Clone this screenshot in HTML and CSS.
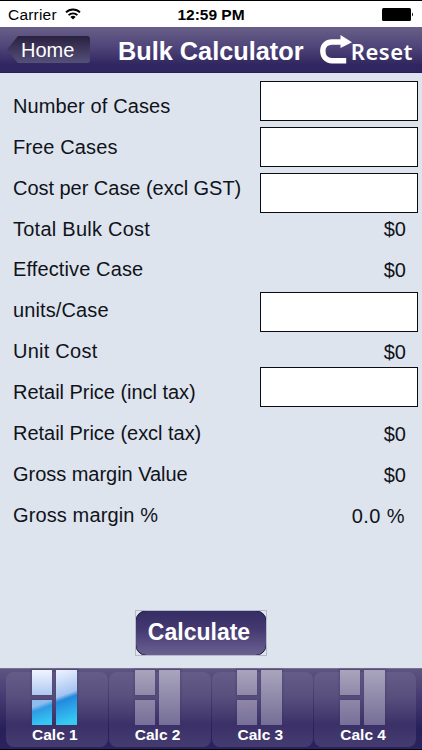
FILE: index.html
```html
<!DOCTYPE html>
<html lang="en">

<head>
    <meta charset="UTF-8">
    <meta name="viewport" content="width=device-width, initial-scale=1">
    <title>Bulk Calculator</title>
    <link rel="stylesheet" href="styles.css">
</head>

<body>
    <div class="status-bar">
        <div class="carrier">
            <span>Carrier</span>
            <svg class="wifi" width="16" height="12" viewBox="0 0 16 12">
                <path d="M1 4.4a10 10 0 0 1 14 0M3.6 7.2a6.2 6.2 0 0 1 8.8 0" fill="none" stroke="#000" stroke-width="1.9" />
                <path d="M5.4 9a3.8 3.8 0 0 1 5.2 0L8 11.6z" />
            </svg>
        </div>
        <span class="time">12:59 PM</span>
        <svg class="battery" width="32" height="13" viewBox="0 0 32 13">
            <rect x="0" y="0" width="29" height="13" rx="1.5" />
            <path d="M30 4.5q2 2 0 4z" />
        </svg>
    </div>

    <header class="nav-bar">
        <a class="home">Home</a>
        <h1>Bulk Calculator</h1>
        <a class="reset">
            <svg width="32" height="30" viewBox="0 0 32 30">
                <path d="M21 7H12C6.500 7 2.800 10.500 2.800 15.800C2.800 21.600 6.500 25.800 12 25.800H26.200" fill="none" stroke="#fff" stroke-width="5.400" />
                <path d="M20.500 0L32 7.200L20.500 13z" fill="#fff" />
            </svg>
            <span>Reset</span>
        </a>
    </header>

    <main>
        <div class="form">
            <div class="labels">
                <label for="cases">Number of Cases</label>
                <label for="free">Free Cases</label>
                <label for="cost" class="long">Cost per Case (excl GST)</label>
                <span class="wide">Total Bulk Cost</span>
                <span>Effective Case</span>
                <label for="units">units/Case</label>
                <span class="wide">Unit Cost</span>
                <label for="retail" class="long">Retail Price (incl tax)</label>
                <span class="long">Retail Price (excl tax)</span>
                <span class="long">Gross margin Value</span>
                <span>Gross margin %</span>
            </div>
            <div class="fields">
                <input type="text" id="cases">
                <input type="text" id="free">
                <input type="text" id="cost">
                <output id="total">$0</output>
                <output id="effective">$0</output>
                <input type="text" id="units">
                <output id="unit-cost">$0</output>
                <input type="text" id="retail">
                <output id="retail-excl">$0</output>
                <output id="margin">$0</output>
                <output id="margin-percent">0.0 %</output>
            </div>
        </div>
        <div class="button-box">
            <button type="button">Calculate</button>
        </div>
    </main>

    <nav class="tab-bar">
        <a class="tab active">
            <span class="panes"><i></i><i class="tall"></i><i></i></span>
            <span>Calc 1</span>
        </a>
        <a class="tab">
            <span class="panes"><i></i><i class="tall"></i><i></i></span>
            <span>Calc 2</span>
        </a>
        <a class="tab">
            <span class="panes"><i></i><i class="tall"></i><i></i></span>
            <span>Calc 3</span>
        </a>
        <a class="tab">
            <span class="panes"><i></i><i class="tall"></i><i></i></span>
            <span>Calc 4</span>
        </a>
    </nav>
</body>

</html>
```
FILE: styles.css
```css
* {
    box-sizing: border-box;
}

body {
    display: flex;
    flex-direction: column;
    width: 422px;
    height: 750px;
    margin: 0;
    overflow: hidden;
    background-color: #dde4ed;
    font-family: "Liberation Sans", Arial, sans-serif;
    color: #10131a;
}

.status-bar {
    display: grid;
    grid-template-columns: 1fr auto 1fr;
    align-items: center;
    height: 27px;
    padding: 2px 8px 0;
    border-top: 1px solid #000;
    background-color: #fff;
    color: #000;
    font-size: 15.5px;
}

.carrier {
    display: flex;
    align-items: center;
    gap: 8px;
    letter-spacing: 0.2px;
}

.wifi {
    margin-top: -3px;
}

.time {
    font-weight: bold;
}

.battery {
    justify-self: end;
    margin-top: -2px;
}

.nav-bar {
    display: flex;
    align-items: center;
    height: 46px;
    padding: 0 9px 0 7px;
    background: linear-gradient(#686088, #4e4479 45%, #30265f 85%, #2f2561);
    border-bottom: 1px solid #282050;
    color: #fff;
}

.home {
    width: 83px;
    height: 27px;
    padding-left: 14px;
    border-radius: 0 3px 3px 0;
    clip-path: polygon(0 50%, 11px 0, 100% 0, 100% 100%, 11px 100%);
    background: linear-gradient(#29213f, #55507a);
    font-size: 20px;
    line-height: 28px;
}

h1 {
    margin: 0 0 0 28px;
    padding-top: 2px;
    font-size: 25.3px;
    line-height: 46px;
    white-space: nowrap;
}

.reset {
    display: flex;
    align-items: center;
    margin-left: auto;
    font-family: "Noto Sans", sans-serif;
    font-size: 22px;
    font-weight: 600;
    letter-spacing: 0.5px;
}

.reset svg {
    margin: 1px -1px 0 0;
}

.reset span {
    margin-top: 2px;
}

main {
    flex: 1;
}

.form {
    display: flex;
    justify-content: space-between;
    height: 537px;
    padding: 8px 4px 0 13px;
    font-size: 20px;
}

.labels {
    display: flex;
    flex-direction: column;
    padding-top: 5px;
    letter-spacing: 0.12px;
}

.labels > * {
    height: 40.87px;
    line-height: 41px;
    white-space: nowrap;
}

.labels .long {
    letter-spacing: -0.03px;
}

.labels .wide {
    letter-spacing: 0.25px;
}

.fields {
    display: flex;
    flex-direction: column;
    width: 158px;
}

.fields input {
    height: 40px;
    margin: 0 0 6px;
    padding: 0 8px;
    border: 1px solid #0a0c10;
    border-radius: 0;
    background-color: #fff;
    font: inherit;
}

.fields output {
    height: 41px;
    padding-right: 12px;
    line-height: 41px;
    text-align: right;
}

#total {
    margin-top: -10px;
}

#units {
    margin: 1px 0 0;
}

#unit-cost {
    height: 35px;
}

#retail {
    margin-bottom: 7px;
}

.fields #margin-percent {
    padding-right: 13px;
    letter-spacing: 0.4px;
}

.button-box {
    width: 132px;
    height: 46px;
    margin: 0 0 0 135px;
    outline: 1px solid #b4bac8;
    outline-offset: -1px;
}

button {
    width: 132px;
    height: 46px;
    padding: 0 4px 2px 0;
    border: 1.5px solid #1c1740;
    border-radius: 12px;
    background: linear-gradient(#372d65, #433870 40%, #6a6190);
    color: #fff;
    font: bold 23px "Liberation Sans", Arial, sans-serif;
}

.tab-bar {
    display: flex;
    gap: 1px;
    height: 82px;
    padding: 3px 6px 2px;
    border-top: 1px solid #77718f;
    border-bottom: 1px solid #000;
    background: linear-gradient(#5c5480, #453b72 35%, #28205a 75%, #2b2360);
}

.tab {
    display: flex;
    flex: 1;
    flex-direction: column;
    align-items: center;
    border-radius: 8px;
    background: linear-gradient(#655d88, #574e7d 35%, #3b3168 70%, #443c70);
    color: #fff;
    font-size: 15.5px;
    font-weight: bold;
    line-height: 18px;
}

.panes {
    display: grid;
    grid-template-columns: 20px 21px;
    grid-template-rows: 25px 25px;
    gap: 5px 4px;
    margin: -2px 5px 0 0;
}

.panes + span {
    margin: 1px 4px 0 0;
}

.panes i {
    background: linear-gradient(#aaa5bd, #8f89a8);
    box-shadow: 0 0 2px 1px rgba(60, 50, 100, 0.35);
}

.panes i:last-child {
    background: linear-gradient(#8e87a8, #777099);
}

.panes .tall {
    grid-row: span 2;
    background: linear-gradient(#aaa5bd, #756e97);
}

.active .panes i {
    background: linear-gradient(#f0f4ff, #afc8f0);
}

.active .panes i:last-child {
    background: linear-gradient(160deg, #8fbcec 22%, #2f9ae4 38%, #35c8f3 85%);
}

.active .panes .tall {
    background: linear-gradient(160deg, #f0f4ff, #a5c4f0 44%, #2389de 52%, #35c8f3 90%);
}
```
